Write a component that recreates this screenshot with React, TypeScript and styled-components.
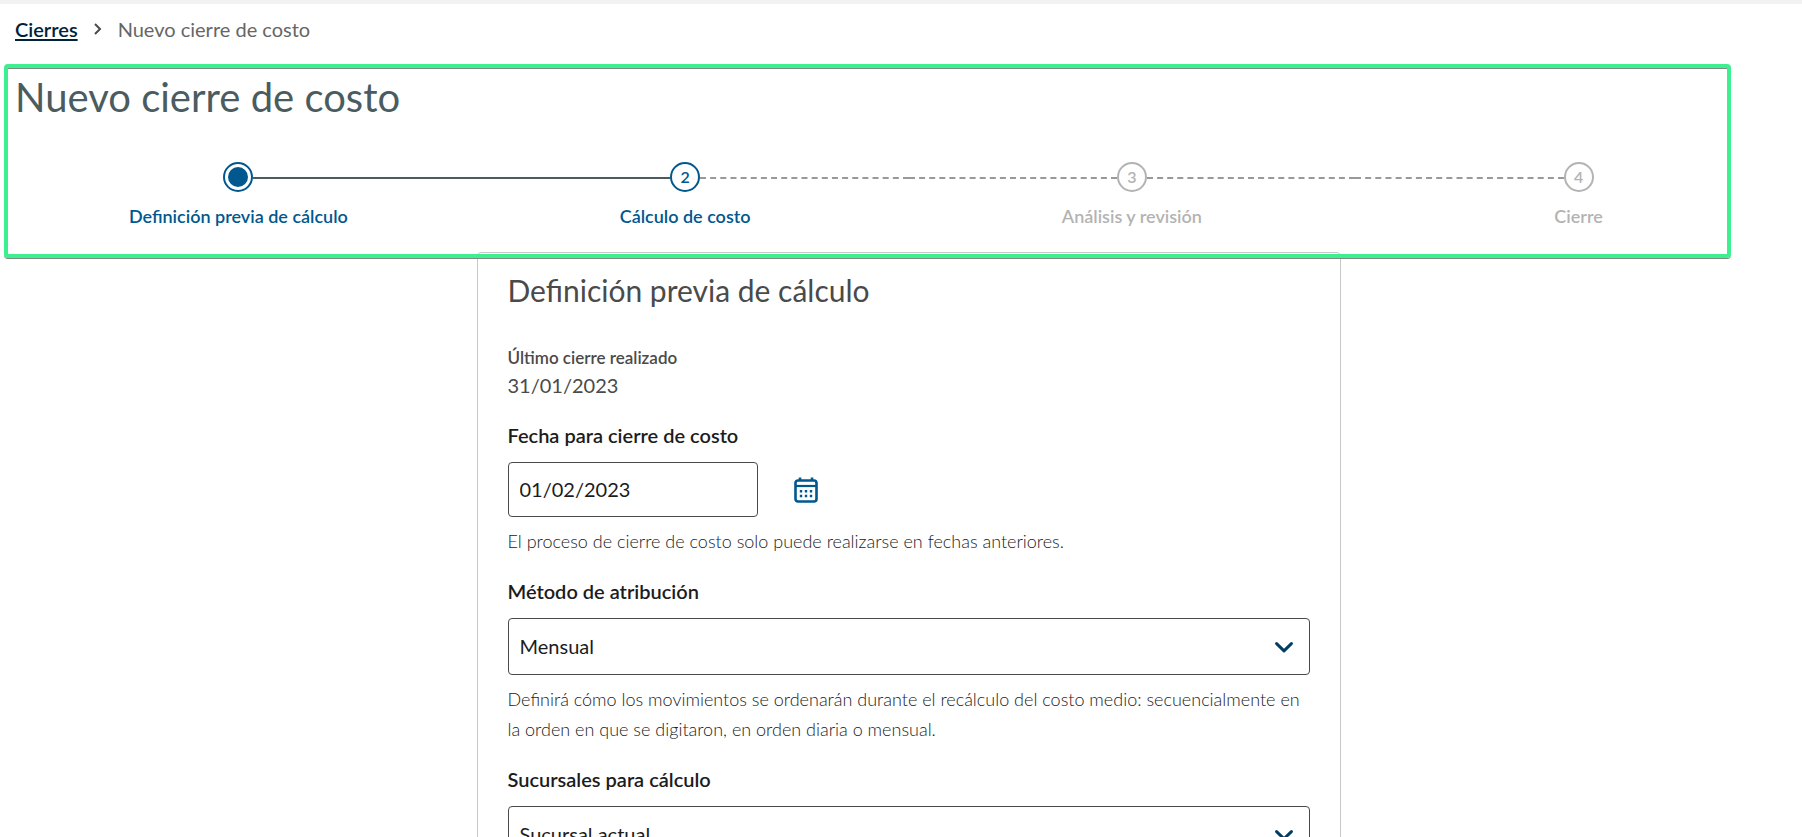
import React, { useState } from "react";
import styled, { createGlobalStyle } from "styled-components";

const color = {
  blue: "#00588f",
  navy: "#003e66",
  ink: "#1c1c1c",
  text: "#4a4a4a",
  muted: "#b3b3b3",
  teal: "#4a5c60",
};

const GlobalStyle = createGlobalStyle`
  *, *::before, *::after { box-sizing: border-box; }
  body {
    margin: 0;
    background: #fff;
    color: ${color.text};
    font-family: Lato, "Open Sans", sans-serif;
    font-size: 20px;
    line-height: 30px;
    overflow: hidden;
  }
  h1, h2, p, dl, dt, dd, ol { margin: 0; padding: 0; }
  input, select, button { font: inherit; color: inherit; }
`;

const Page = styled.div`
  height: 100vh;
  overflow: hidden;
  border-top: 4px solid #f2f2f2;
`;

const Breadcrumb = styled.nav`
  display: flex;
  align-items: center;
  padding: 10px 15px 0;
  color: #666;
`;

const BreadcrumbLink = styled.a`
  color: #00233b;
  font-weight: 600;
  text-decoration: underline;
  text-decoration-thickness: 2px;
  text-underline-offset: 2px;
`;

const BreadcrumbArrow = styled.svg`
  width: 8px;
  height: 12px;
  margin: 0 16px;
  fill: none;
  stroke: ${color.text};
  stroke-width: 2;
`;

const Process = styled.header`
  position: relative;
  margin-top: 20px;
  padding-top: 8px;
`;

/* Tour highlight drawn over the title, the stepper and the card's top edge. */
const Highlight = styled.div`
  position: absolute;
  inset: 0 71px -6px 4px;
  border: 4px solid #3df08f;
  border-radius: 4px;
  box-shadow: inset 0 1px 0 #7d8a84, 0 1px 0 #7d8a84;
  pointer-events: none;
`;

const Title = styled.h1`
  padding-left: 15px;
  color: ${color.teal};
  font-size: 40px;
  font-weight: 400;
  line-height: 50px;
`;

const Stepper = styled.ol`
  display: flex;
  margin-top: 40px;
  padding: 0 0 24px 15px;
  list-style: none;
`;

type StepState = "current" | "next" | "pending";

const StepItem = styled.li<{ $state: StepState }>`
  flex: 1;
  text-align: center;
  font-size: 18px;
  font-weight: 600;
  line-height: 24px;
  color: ${(p) => (p.$state === "pending" ? color.muted : color.blue)};
`;

const StepTrack = styled.div`
  display: flex;
  align-items: center;
  margin-bottom: 12px;
`;

const Connector = styled.span<{ $line: "none" | "solid" | "dashed" }>`
  flex: 1;
  margin-top: 2px;
  border-top: 2px ${(p) => p.$line}
    ${(p) => (p.$line === "solid" ? color.teal : "#999")};
`;

const StepCircle = styled.span`
  display: grid;
  place-items: center;
  width: 30px;
  height: 30px;
  border: 2px solid;
  border-radius: 50%;
  font-size: 16px;
`;

const StepDot = styled.span`
  width: 20px;
  height: 20px;
  border-radius: 50%;
  background: ${color.blue};
`;

const CardArea = styled.div`
  padding-left: 15px;
`;

const Card = styled.main`
  width: 864px;
  max-width: 100%;
  margin: 0 auto;
  padding: 17px 30px 30px;
  border: 1px solid #c8c8c8;
  border-radius: 4px;
`;

const CardTitle = styled.h2`
  margin-bottom: 36px;
  font-size: 30px;
  font-weight: 400;
  line-height: 40px;
`;

const Form = styled.form`
  display: flex;
  flex-direction: column;
  gap: 20px;
`;

const SummaryTerm = styled.dt`
  font-size: 17px;
  font-weight: 600;
  line-height: 24px;
`;

const SummaryValue = styled.dd`
  margin: 0;
`;

const Field = styled.div`
  display: flex;
  flex-direction: column;
`;

const Label = styled.label`
  margin-bottom: 12px;
  color: ${color.ink};
  font-weight: 600;
`;

const Help = styled.p`
  margin-top: 9px;
  color: #222;
  font-size: 18px;
  font-weight: 300;
`;

const DateRow = styled.div`
  display: flex;
  align-items: center;
  gap: 30px;
`;

const DateInput = styled.input`
  width: 250px;
  height: 55px;
  padding: 0 11px 2px;
  border: 1px solid ${color.text};
  border-radius: 4px;
  background: #fff;
  color: ${color.ink};
`;

const IconButton = styled.button`
  display: grid;
  place-items: center;
  width: 36px;
  height: 36px;
  padding: 0;
  border: 0;
  background: none;
  color: ${color.blue};
`;

const SelectBox = styled.div`
  display: grid;
  align-items: center;
`;

const Select = styled.select`
  grid-area: 1 / 1;
  width: 100%;
  height: 57px;
  padding: 0 50px 2px 11px;
  border: 1px solid ${color.text};
  border-radius: 4px;
  background: #fff;
  color: ${color.ink};
  appearance: none;
`;

const SelectArrow = styled.svg`
  grid-area: 1 / 1;
  justify-self: end;
  width: 18px;
  height: 11px;
  margin: 2px 17px 0 0;
  fill: none;
  stroke: ${color.navy};
  stroke-width: 3;
  pointer-events: none;
`;

const steps: { label: string; state: StepState }[] = [
  { label: "Definición previa de cálculo", state: "current" },
  { label: "Cálculo de costo", state: "next" },
  { label: "Análisis y revisión", state: "pending" },
  { label: "Cierre", state: "pending" },
];

function CalendarIcon() {
  return (
    <svg width="24" height="26" viewBox="0 0 24 26" fill="none" stroke="currentColor" aria-hidden="true">
      <rect x="1.5" y="3.5" width="21" height="21" rx="2.5" strokeWidth="2.6" />
      <path d="M1.5 9H22.5" strokeWidth="2.2" />
      <path d="M6 .5V4M18 .5V4" strokeWidth="2.6" />
      <path d="M5.8 14.2h2.4M10.8 14.2h2.4M15.8 14.2h2.4M5.8 19h2.4M10.8 19h2.4M15.8 19h2.4" strokeWidth="2.4" />
    </svg>
  );
}

function SelectField(props: { id: string; label: string; options: string[]; help?: string }) {
  const { id, label, options, help } = props;
  return (
    <Field>
      <Label htmlFor={id}>{label}</Label>
      <SelectBox>
        <Select id={id}>
          {options.map((o) => (
            <option key={o}>{o}</option>
          ))}
        </Select>
        <SelectArrow viewBox="0 0 18 11" aria-hidden="true">
          <path d="M1.6 1.6L9 8.8L16.4 1.6" strokeLinecap="round" strokeLinejoin="round" />
        </SelectArrow>
      </SelectBox>
      {help && <Help>{help}</Help>}
    </Field>
  );
}

export default function App() {
  const [date, setDate] = useState("01/02/2023");
  return (
    <Page>
      <GlobalStyle />
      <Breadcrumb aria-label="Ruta">
        <BreadcrumbLink href="#cierres">Cierres</BreadcrumbLink>
        <BreadcrumbArrow viewBox="0 0 8 12" aria-hidden="true">
          <path d="M1 1L6 6L1 11" />
        </BreadcrumbArrow>
        <span>Nuevo cierre de costo</span>
      </Breadcrumb>

      <Process>
        <Title>Nuevo cierre de costo</Title>
        <Stepper>
          {steps.map((step, i) => (
            <StepItem key={step.label} $state={step.state}>
              <StepTrack>
                <Connector $line={i === 0 ? "none" : i === 1 ? "solid" : "dashed"} />
                <StepCircle>{step.state === "current" ? <StepDot /> : i + 1}</StepCircle>
                <Connector $line={i === steps.length - 1 ? "none" : i === 0 ? "solid" : "dashed"} />
              </StepTrack>
              {step.label}
            </StepItem>
          ))}
        </Stepper>
        <Highlight />
      </Process>

      <CardArea>
        <Card>
          <CardTitle>Definición previa de cálculo</CardTitle>
          <Form>
            <dl>
              <SummaryTerm>Último cierre realizado</SummaryTerm>
              <SummaryValue>31/01/2023</SummaryValue>
            </dl>
            <Field>
              <Label htmlFor="fecha">Fecha para cierre de costo</Label>
              <DateRow>
                <DateInput id="fecha" value={date} onChange={(e) => setDate(e.target.value)} />
                <IconButton type="button" aria-label="Abrir calendario">
                  <CalendarIcon />
                </IconButton>
              </DateRow>
              <Help>El proceso de cierre de costo solo puede realizarse en fechas anteriores.</Help>
            </Field>
            <SelectField
              id="metodo"
              label="Método de atribución"
              options={["Mensual"]}
              help="Definirá cómo los movimientos se ordenarán durante el recálculo del costo medio: secuencialmente en la orden en que se digitaron, en orden diaria o mensual."
            />
            <SelectField id="sucursales" label="Sucursales para cálculo" options={["Sucursal actual"]} />
          </Form>
        </Card>
      </CardArea>
    </Page>
  );
}
